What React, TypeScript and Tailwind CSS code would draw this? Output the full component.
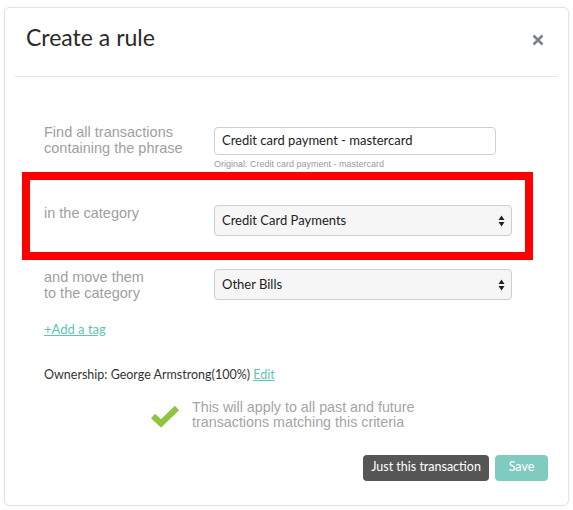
import React from "react";

const geo = { fontFamily: "Lato, 'Liberation Sans', sans-serif" };
const helv = { fontFamily: "'Liberation Sans', Arial, sans-serif" };

function Arrows() {
  return (
    <svg width="7" height="12" viewBox="0 0 7 12" className="shrink-0">
      <path d="M3.5 0.5 L6.5 5 L0.5 5 Z" fill="#222" />
      <path d="M3.5 11.5 L6.5 7 L0.5 7 Z" fill="#222" />
    </svg>
  );
}

function Select({ value }: { value: string }) {
  return (
    <div
      className="w-[298px] h-[31px] rounded-[4px] border border-[#cfcfcf] bg-[#f6f6f6] flex items-center justify-between pl-[7px] pr-[6px] text-[13px] text-[#222]"
      style={geo}
    >
      <span>{value}</span>
      <Arrows />
    </div>
  );
}

export default function App() {
  return (
    <div className="w-[573px] h-[510px] bg-white pt-[7px] pl-[4px]">
      <div className="w-[565px] h-[499px] border border-[#e4e4e4] rounded-[6px] shadow-[0_0_3px_rgba(0,0,0,0.06)] bg-white flex flex-col">
        <div className="h-[68px] flex items-center justify-between pl-[21px] pr-[24px]">
          <div className="text-[23px] text-[#2a2a2a] pb-[9px]" style={geo}>
            Create a rule
          </div>
          <svg width="12" height="12" viewBox="0 0 12 12" className="mb-[4px]">
            <path d="M1.5 1.5 L10.5 10.5 M10.5 1.5 L1.5 10.5" stroke="#7b838b" strokeWidth="2.6" strokeLinecap="butt" />
          </svg>
        </div>
        <div className="h-px bg-[#e6e6e6] mx-[10px]" />

        <div className="pt-[47px] flex pl-[39px]">
          <div className="w-[170px] text-[14.5px] leading-[16px] text-[#a0a0a0]" style={helv}>
            Find all transactions
            <br />
            containing the phrase
          </div>
          <div className="flex flex-col">
            <div
              className="w-[282px] h-[28px] mt-[3px] rounded-[4px] border border-[#cfcfcf] bg-white flex items-center pl-[7px] text-[13px] text-[#222]"
              style={geo}
            >
              Credit card payment - mastercard
            </div>
            <div className="mt-[4px] text-[9px] leading-[10px] text-[#9a9a9a]" style={helv}>
              Original: Credit card payment - mastercard
            </div>
          </div>
        </div>

        <div className="mt-[3px] ml-[17px] w-[511px] border-[8px] border-[#ff0000] pl-[14px] pt-[25px] pb-[16px] flex">
          <div className="w-[170px] text-[14.5px] leading-[16px] text-[#a0a0a0]" style={helv}>
            in the category
          </div>
          <Select value="Credit Card Payments" />
        </div>

        <div className="mt-[9px] flex pl-[39px]">
          <div className="w-[170px] text-[14.5px] leading-[16px] text-[#a0a0a0]" style={helv}>
            and move them
            <br />
            to the category
          </div>
          <Select value="Other Bills" />
        </div>

        <div className="mt-[15px] pl-[39px]">
          <span className="text-[13px] text-[#5ec4b6] underline" style={geo}>
            +Add a tag
          </span>
        </div>

        <div className="mt-[26px] pl-[39px] text-[12.5px] text-[#333]" style={geo}>
          Ownership: George Armstrong(100%){" "}
          <span className="text-[#5ec4b6] underline">Edit</span>
        </div>

        <div className="mt-[15px] flex items-center pl-[146px]">
          <svg width="28" height="22" viewBox="0 0 28 22" className="mt-[3px]">
            <path d="M2 11 L10 18.5 L26 3" stroke="#8cc63f" strokeWidth="6" fill="none" strokeLinejoin="miter" />
          </svg>
          <div className="ml-[13px] text-[14.3px] leading-[15px] text-[#a5a5a5]" style={helv}>
            This will apply to all past and future
            <br />
            transactions matching this criteria
          </div>
        </div>

        <div className="mt-[25px] flex justify-end gap-[6px] pr-[20px]">
          <div
            className="w-[126px] h-[26px] rounded-[4px] bg-[#565656] text-white text-[12.5px] flex items-center justify-center"
            style={geo}
          >
            Just this transaction
          </div>
          <div
            className="w-[53px] h-[26px] rounded-[4px] bg-[#80cbc0] text-white text-[12.5px] flex items-center justify-center"
            style={geo}
          >
            Save
          </div>
        </div>
      </div>
    </div>
  );
}
